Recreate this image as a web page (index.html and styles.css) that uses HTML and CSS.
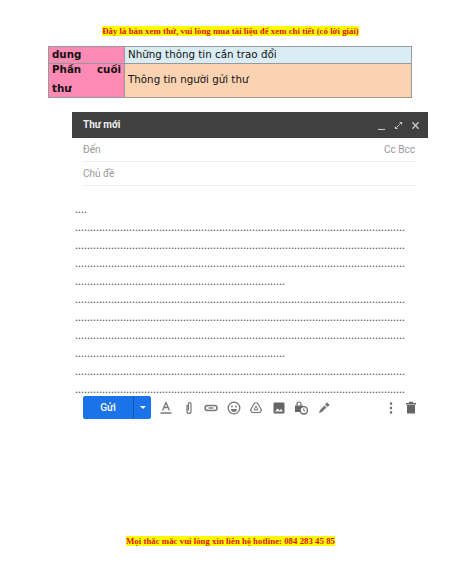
FILE: index.html
```html
<!DOCTYPE html>
<html lang="vi">
<head>
<meta charset="utf-8">
<title>Thư mới</title>
<link rel="stylesheet" href="styles.css">
</head>
<body>
<div class="page">
  <p class="notice notice-top"><span class="mark">Đây là bản xem thử, vui lòng mua tài liệu để xem chi tiết (có lời giải)</span></p>
  <div class="table">
    <div class="cell head pink">dung</div>
    <div class="cell blue">Những thông tin cần trao đổi</div>
    <div class="cell head pink"><span class="justify">Phần cuối thư</span></div>
    <div class="cell peach center">Thông tin người gửi thư</div>
  </div>
  <div class="compose">
    <div class="bar">
      <span class="bar-title">Thư mới</span>
      <div class="bar-icons">
        <svg width="9" height="9" viewBox="0 0 10 10"><path d="M1 9.500h8" stroke="#c8c8c8" stroke-width="1.400"/></svg>
        <svg width="9" height="9" viewBox="0 0 10 10"><path d="M5.500 1h3.500v3.500zM1 5.500v3.500h3.500z" fill="#c8c8c8"/><path d="M3 7l4-4" stroke="#c8c8c8"/></svg>
        <svg width="9" height="9" viewBox="0 0 10 10"><path d="M1.500 1.500l7 7M8.500 1.500l-7 7" stroke="#c8c8c8" stroke-width="1.500"/></svg>
      </div>
    </div>
    <div class="fields">
      <div class="field"><span>Đến</span><span>Cc Bcc</span></div>
      <div class="field"><span>Chủ đề</span></div>
    </div>
    <div class="body-text">
      <div>....</div>
      <div>..............................................................................................................</div>
      <div>..............................................................................................................</div>
      <div>..............................................................................................................</div>
      <div>......................................................................</div>
      <div>..............................................................................................................</div>
      <div>..............................................................................................................</div>
      <div>..............................................................................................................</div>
      <div>......................................................................</div>
      <div>..............................................................................................................</div>
      <div>..............................................................................................................</div>
    </div>
    <div class="tools">
      <div class="send">
        <span class="send-label">Gửi</span>
        <span class="send-more"><svg width="6" height="3" viewBox="0 0 8 4"><path d="M0 0h8L4 4z" fill="#fff"/></svg></span>
      </div>
      <div class="icons">
        <svg width="14" height="14" viewBox="0 0 14 14"><path d="M3.500 9.500L7 1.500l3.500 8M5 6.500h4" fill="none" stroke="#777" stroke-width="1.300"/><path d="M1.500 12h11" stroke="#777" stroke-width="1.500"/></svg>
        <svg width="14" height="14" viewBox="0 0 14 14"><path d="M5 4v6.500a2 2 0 0 0 4 0V3a1.300 1.300 0 0 0-2.600 0v6.500" fill="none" stroke="#777" stroke-width="1.200"/></svg>
        <svg width="14" height="14" viewBox="0 0 14 14"><rect x="1" y="4.500" width="12" height="5" rx="2.500" fill="none" stroke="#777" stroke-width="1.500"/><path d="M4.500 7h5" stroke="#777" stroke-width="1.400"/></svg>
        <svg width="14" height="14" viewBox="0 0 14 14"><circle cx="7" cy="7" r="5.800" fill="none" stroke="#777" stroke-width="1.300"/><circle cx="5" cy="5.500" r=".9" fill="#777"/><circle cx="9" cy="5.500" r=".9" fill="#777"/><path d="M4 8h6a3 3 0 0 1-6 0z" fill="#777"/></svg>
        <svg width="14" height="14" viewBox="0 0 14 14"><path d="M5.500 2h3l4 7-1.500 2.500H3L1.500 9z" fill="none" stroke="#777" stroke-width="1.200"/><path d="M7 5L5 9h4z" fill="none" stroke="#777"/></svg>
        <svg width="14" height="14" viewBox="0 0 14 14"><rect x="1.500" y="1.500" width="11" height="11" rx="1" fill="#666"/><path d="M3 10.500l2.500-3 2 2 1.500-1.500 2 2.500z" fill="#fff"/></svg>
        <svg width="14" height="14" viewBox="0 0 14 14"><path d="M1 4.500h8V11H1z" fill="#666"/><path d="M3 4.500V3a2 2 0 0 1 4 0v1.500" fill="none" stroke="#666" stroke-width="1.200"/><circle cx="9.800" cy="9.300" r="3.700" fill="#fff" stroke="#666" stroke-width="1.300"/><path d="M9.800 7.500v2l1.300.8" fill="none" stroke="#666"/></svg>
        <svg width="14" height="14" viewBox="0 0 14 14"><path d="M2 12l1-3 4.500-4.500 2 2L5 11z" fill="#777"/><path d="M8 3.500l2-2.200 2.700 2.700L10.500 6z" fill="#777"/></svg>
      </div>
      <div class="icons-end">
        <svg width="4" height="12" viewBox="0 0 4 12"><circle cx="2" cy="1.500" r="1.200" fill="#666"/><circle cx="2" cy="6" r="1.200" fill="#666"/><circle cx="2" cy="10.500" r="1.200" fill="#666"/></svg>
        <svg width="12" height="13" viewBox="0 0 12 13"><path d="M1 2h10v1.500H1zM4 .8h4V2H4zM2 4h8v8.500H2z" fill="#666"/></svg>
      </div>
    </div>
  </div>
  <p class="notice notice-bottom"><span class="mark">Mọi thắc mắc vui lòng xin liên hệ hotline: 084 283 45 85</span></p>
</div>
</body>
</html>
```
FILE: styles.css
```css
html, body { margin: 0; padding: 0; background: #fff; }
.page { width: 450px; height: 582px; overflow: hidden; display: flex; flex-direction: column; }
.notice { margin: 0; padding-left: 11px; text-align: center; font: bold 8.830px/11px "Liberation Serif", serif; color: #e01010; }
.mark { background: #ffff00; }
.notice-top { padding-top: 26px; }
.notice-bottom { margin-top: auto; padding-bottom: 35px; }
.table {
  margin: 9px 38px 0 48px;
  display: grid;
  grid-template-columns: 75px 1fr;
  grid-template-rows: 16px 34px;
  border: 1px solid #999;
  font: 10.300px/14px "DejaVu Sans", sans-serif;
  color: #111;
}
.cell { padding: 0 3px; border-left: 1px solid #999; border-top: 1px solid #999; overflow: hidden; }
.cell:nth-child(odd) { border-left: 0; }
.cell:nth-child(-n+2) { border-top: 0; }
.head { font-weight: bold; }
.pink { background: #ff8ab4; }
.blue { background: #dbedf4; }
.peach { background: #fbd3b2; }
.center { display: flex; align-items: center; padding-bottom: 4px; }
.justify { display: block; margin-top: -4px; line-height: 19px; text-align: justify; }
.compose { margin: 14px 22px 0 72px; font-family: Roboto, "Liberation Sans", sans-serif; }
.bar { height: 26px; background: #404040; display: flex; align-items: center; justify-content: space-between; padding: 0 8px 0 11px; color: #eee; }
.bar-title { font-size: 10px; font-weight: 700; padding-bottom: 2px; }
.bar-icons { display: flex; gap: 8px; }
.fields { margin: 0 11px; }
.field { box-sizing: border-box; height: 24px; padding-right: 2px; display: flex; align-items: center; justify-content: space-between; border-bottom: 1px solid #efefef; font-size: 10px; color: #999; }
.body-text { margin: 14px 0 0 3px; font: 12px/18px "Liberation Serif", serif; color: #555; height: 196px; white-space: nowrap; }
.tools { display: flex; align-items: center; margin: 0 11px; height: 23px; }
.send { width: 68px; height: 23px; border-radius: 2px; background: #1a73e8; display: flex; color: #fff; font-size: 10px; font-weight: 500; }
.send-label { flex: 1; display: flex; align-items: center; justify-content: center; }
.send-more { width: 17px; border-left: 1px solid #1558b0; display: flex; align-items: center; justify-content: center; }
.icons { display: flex; gap: 8.500px; margin-left: 8px; }
.icons-end { display: flex; align-items: center; gap: 12px; margin-left: auto; }
```
